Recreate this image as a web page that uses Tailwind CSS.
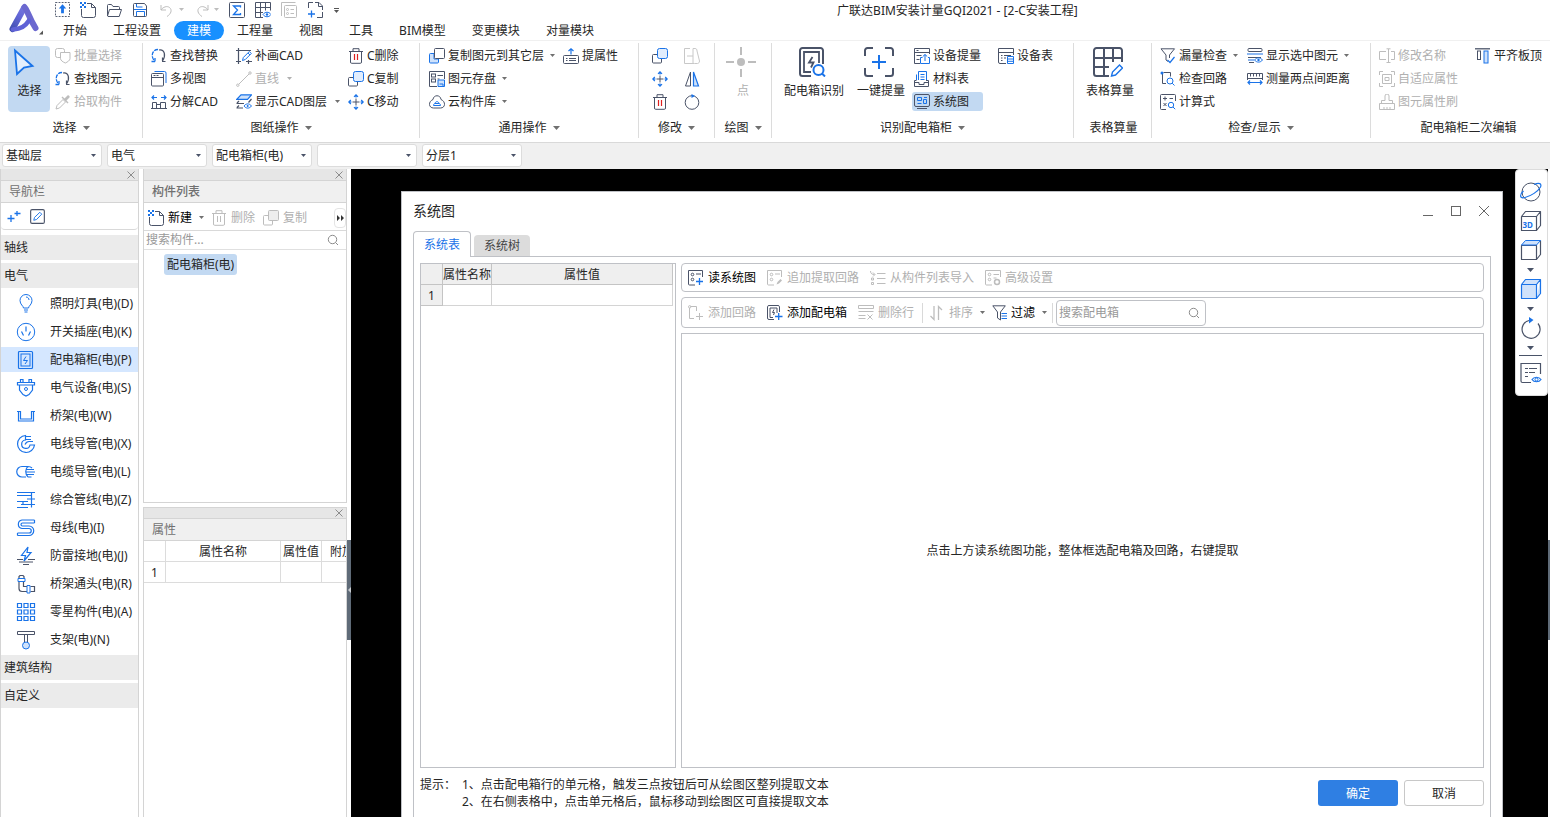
<!DOCTYPE html>
<html lang="zh-CN">
<head>
<meta charset="utf-8">
<title>广联达BIM安装计量GQI2021</title>
<script src="https://cdn.jsdelivr.net/npm/@tailwindcss/browser@4"></script>
</head>
<body class="h-screen overflow-hidden flex flex-col bg-white text-[#262626] text-xs leading-4 font-['Noto_Sans','Noto_Sans_CJK_SC',sans-serif]">

<svg class="hidden" fill="none">
  <symbol id="caret" viewBox="0 0 7 4"><path d="M0 0h7L3.5 4z" fill="currentColor"/></symbol>
  <symbol id="close" viewBox="0 0 8 8"><path d="M.5.5l7 7M7.5.5l-7 7" stroke="#8c8c8c"/></symbol>
  <symbol id="mag" viewBox="0 0 12 12"><circle cx="5.5" cy="5.5" r="4.2" stroke="#8c8c8c"/><path d="M8.5 8.500l2.500 2.500" stroke="#8c8c8c"/></symbol>

  <!-- quick access -->
  <symbol id="q-up" viewBox="0 0 16 16"><rect x=".5" y=".5" width="15" height="15" stroke="#4a5368" stroke-dasharray="2 1.300"/><path d="M8 2.500l4 4.500H9.500v5h-3V7H4z" fill="#1a73e8"/></symbol>
  <symbol id="new" viewBox="0 0 16 16"><path d="M7 1.500h4.500l4 4v8a2 2 0 0 1-2 2h-10a2 2 0 0 1-2-2V7M11.500 1.500v4h4" stroke="#4a5368"/><path d="M0 0h2v2H0zM4 0h2v2H4zM2 2h2v2H2zM0 4h2v2H0zM4 4h2v2H4z" fill="#1a73e8"/></symbol>
  <symbol id="q-open" viewBox="0 0 16 16"><path d="M1.500 14V3.500a1 1 0 0 1 1-1h3l1.500 2h5.500a1 1 0 0 1 1 1V7M1.500 14l2-6.500h12l-2.300 7H2z" stroke="#4a5368"/></symbol>
  <symbol id="q-save" viewBox="0 0 16 16"><path d="M1.500 2.500a1 1 0 0 1 1-1h10l2 2.500v9.500a1 1 0 0 1-1 1h-11a1 1 0 0 1-1-1z" stroke="#4a5368"/><path d="M4.500 2v3h6M4.500 14V9.500h8V14M2 7.500h12" stroke="#1a73e8"/></symbol>
  <symbol id="q-undo" viewBox="0 0 16 16"><path d="M2 3v5h5M2 8c2-3 6-4.500 8.500-2.500C13.500 8 12 12 8 14.500" stroke="#bdbdbd"/></symbol>
  <symbol id="q-redo" viewBox="0 0 16 16"><path d="M14 3v5H9M14 8c-2-3-6-4.500-8.500-2.500C2.500 8 4 12 8 14.500" stroke="#bdbdbd"/></symbol>
  <symbol id="q-sum" viewBox="0 0 16 16"><rect x=".5" y=".5" width="15" height="15" rx="1" stroke="#4a5368"/><path d="M11.500 5.500v-1.500h-7l4 4-4 4.500h7V11" stroke="#1a73e8" stroke-width="1.300"/></symbol>
  <symbol id="q-grid" viewBox="0 0 16 16"><path d="M.5 .5h15v8M.5 .5v15H8M.5 5.500h15M.5 10.500H8M5.500 .5v15M10.500 .5v8" stroke="#4a5368"/><path d="M8 12.500c2-3 6-3 8 0-2 3-6 3-8 0z" stroke="#1a73e8"/><circle cx="12" cy="12.500" r="1.200" fill="#1a73e8"/></symbol>
  <symbol id="q-list" viewBox="0 0 16 16"><rect x="3.500" y="3.500" width="12" height="12" rx="1" stroke="#bdbdbd"/><path d="M.5 14V.5h14M9.500 7.500H13M9.500 11.500H13" stroke="#bdbdbd"/><circle cx="6.500" cy="7.500" r="1" stroke="#bdbdbd"/><circle cx="6.500" cy="11.500" r="1" stroke="#bdbdbd"/></symbol>
  <symbol id="q-add" viewBox="0 0 16 16"><path d="M1.500 6V.5H6M8 .5h4l3.500 3.500V8M15.500 10v5.500H10M11.500 .5v4h4" stroke="#4a5368"/><path d="M4.500 8.500v7M1 12h7" stroke="#1a73e8" stroke-width="1.300"/></symbol>

  <!-- ribbon small icons -->
  <symbol id="batch" viewBox="0 0 16 16"><rect x=".5" y=".5" width="9" height="9" rx="2" stroke="#bdbdbd"/><path d="M5.500 4.500h9.500v6c0 2-2.500 3.500-4.700 4.500-2.300-1-4.800-2.500-4.800-4.500z" fill="#fff" stroke="#bdbdbd"/></symbol>
  <symbol id="find" viewBox="0 0 16 16"><path d="M7 1.500C1 1.500-.5 8.500 3.500 13M4 13.500V10M4 13.500H.5" stroke="#1a73e8" stroke-width="1.300" stroke-dasharray="4 1"/><path d="M8 2c6-1 7 6 3.500 11M11.500 13V9.500M11 13.500h3.500" stroke="#4a5368" stroke-width="1.200"/></symbol>
  <symbol id="pick" viewBox="0 0 16 16"><path d="M1 15l1-3.500 6-6 2.500 2.500-6 6z" stroke="#bdbdbd"/><path d="M6.500 3.500l6 6 1-1-2-2 3-3c.8-1-1-3-2-2l-3 3-2-2z" fill="#bdbdbd"/></symbol>
  <symbol id="views" viewBox="0 0 16 16"><path d="M3.500 .5h10a1.500 1.500 0 0 1 1.500 1.500v10" stroke="#1a73e8"/><rect x=".5" y="2.500" width="12" height="12.500" rx="1" stroke="#4a5368"/><path d="M.5 6.500h12M2.500 4.500h2M5.500 4.500h2" stroke="#4a5368"/></symbol>
  <symbol id="split" viewBox="0 0 16 16"><path d="M1.500 14.500v-6h4v6M9.500 14.500v-6h5v6M0 14.500h16M5.500 10.500h4" stroke="#4a5368"/><path d="M1 3.500h5M10 3.500h5M3 1.500l-2 2 2 2M13 1.500l2 2-2 2" stroke="#1a73e8" stroke-width="1.200"/></symbol>
  <symbol id="patch" viewBox="0 0 16 16"><path d="M2.500 0v16M0 2.500h15M0 13.500h5M12.500 12v4M10 13.500h6" stroke="#4a5368" stroke-width="1.200"/><path d="M6.500 12.500l.8-3 6-6 2 2-6 6zM12 5l2 2" stroke="#1a73e8"/></symbol>
  <symbol id="line" viewBox="0 0 16 16"><path d="M3 13L13 3" stroke="#bdbdbd"/><circle cx="1.800" cy="14.200" r="1.200" stroke="#bdbdbd"/><circle cx="14" cy="2" r="1.200" stroke="#bdbdbd"/></symbol>
  <symbol id="layers" viewBox="0 0 16 16"><path d="M5 .8h10.500l-4 4.500H.8z" stroke="#1a73e8" stroke-width="1.200" fill="#cfe2fb"/><path d="M.5 9.500h7.500M1 9l2-2M15.500 5l-3 3.500M.5 14h6.500M1 13.500l2-2" stroke="#4a5368" stroke-width="1.200"/><path d="M8 12c2-2.800 5.500-2.800 7.500 0-2 2.800-5.500 2.800-7.500 0z" stroke="#1a73e8"/><circle cx="11.700" cy="12" r="1" fill="#1a73e8"/></symbol>
  <symbol id="trash" viewBox="0 0 16 16"><path d="M1 3.500h14M5 3V.7h6V3M2.500 4v10a1.200 1.200 0 0 0 1.200 1.300h8.600a1.200 1.200 0 0 0 1.200-1.300V4" stroke="#4a5368"/><path d="M6.500 6v6M9.500 6v6" stroke="#e02020" stroke-width="1.200"/></symbol>
  <symbol id="trashg" viewBox="0 0 16 16"><path d="M1 3.500h14M5 3V.7h6V3M2.500 4v10a1.200 1.200 0 0 0 1.200 1.300h8.600a1.200 1.200 0 0 0 1.200-1.300V4M6.500 6v6M9.500 6v6" stroke="#bdbdbd"/></symbol>
  <symbol id="copy" viewBox="0 0 16 16"><path d="M5 6.500H1.500a1 1 0 0 0-1 1v6.500a1 1 0 0 0 1 1h7a1 1 0 0 0 1-1V11" stroke="#4a5368"/><rect x="5.500" y=".5" width="10" height="10" rx="2" stroke="#1a73e8" fill="#e1edfd"/></symbol>
  <symbol id="copyg" viewBox="0 0 16 16"><path d="M5 5.500H1.500a1 1 0 0 0-1 1v7.500a1 1 0 0 0 1 1h7a1 1 0 0 0 1-1V11" stroke="#bdbdbd"/><rect x="5.500" y=".5" width="10" height="10" rx="1" stroke="#bdbdbd" fill="#eee"/></symbol>
  <symbol id="copy2" viewBox="0 0 16 16"><path d="M5 5.500H1.500a1 1 0 0 0-1 1v7.500a1 1 0 0 0 1 1h7a1 1 0 0 0 1-1V11H5z" stroke="#1a73e8" fill="#cfe2fb"/><rect x="5.500" y=".5" width="10" height="10" rx="1" stroke="#4a5368" fill="#fff"/></symbol>
  <symbol id="move" viewBox="0 0 16 16"><path d="M8 4.500v7M4.500 8h7" stroke="#4a5368"/><path d="M8 3.500V1M8 12.500V15M3.500 8H1M12.500 8H15M6 2.800l2-2 2 2M6 13.200l2 2 2-2M2.800 6l-2 2 2 2M13.200 6l2 2-2 2" stroke="#1a73e8" stroke-width="1.200"/></symbol>
  <symbol id="store" viewBox="0 0 16 16"><path d="M8 15.500H.5V.5h15V8M8.500 4.500H14M8.500 8h2" stroke="#4a5368"/><rect x="2.500" y="3" width="4" height="3" stroke="#4a5368"/><rect x="2.500" y="8" width="4" height="3" stroke="#4a5368"/><path d="M9 9h6.500v6.500H9zM10.500 13h3.500v2.500" stroke="#1a73e8" fill="#cfe2fb"/></symbol>
  <symbol id="cloud" viewBox="0 0 16 16"><path d="M4 5.500c.5-5 7.500-5 8 0 5 2 4.500 8.500-.5 8.500h-7c-5 0-5.500-6.500-.5-8.500z" stroke="#4a5368"/><path d="M4.500 11.500c0-1.500 1-2 1.500-2 .5-2.500 3.500-2.500 4 0 .5 0 1.500.5 1.500 2zM6 9.500h4" stroke="#1a73e8"/></symbol>
  <symbol id="lift" viewBox="0 0 16 16"><rect x=".5" y="7.500" width="15" height="8" rx="1" stroke="#4a5368"/><path d="M3 10.500h1.500M6 10.500h7M3 12.500h1.500M6 12.500h7" stroke="#4a5368"/><path d="M8 6.500V1M5.500 3L8 .8 10.500 3" stroke="#1a73e8" stroke-width="1.200"/></symbol>
  <symbol id="mirrorg" viewBox="0 0 16 16"><path d="M6 .5H.5v15H9M9 8H3M9 15.500V.5h2c1.500 0 2 1 2 2.500l2.500 10c0 1.500-1 2.500-2 2.500h-3z" stroke="#c8c8c8"/></symbol>
  <symbol id="mirror" viewBox="0 0 16 16"><path d="M6.500 1v14H1.500z" stroke="#4a5368"/><path d="M9.500 1v14h5z" stroke="#1a73e8" stroke-width="1.200" fill="#cfe2fb"/></symbol>
  <symbol id="rot" viewBox="0 0 16 16"><circle cx="8" cy="8.500" r="6.800" stroke="#4a5368"/><path d="M7.500 0v4l3.500-2z" fill="#1a73e8"/></symbol>
  <symbol id="devup" viewBox="0 0 16 16"><path d="M6 15.500H.5V.5h15V6M.5 4.500h15M2.500 2.500h2M2.500 7.500h5M2.500 11.500h3" stroke="#4a5368"/><path d="M8.500 9.500H6.500v6h9v-6H14M11 13V6.500M8.800 8.500l2.200-2 2.200 2" stroke="#1a73e8"/></symbol>
  <symbol id="mat" viewBox="0 0 16 16"><path d="M2.500 9V3.500M12.500 9V.5h-8v8.500M6.500 3.500h4M6.500 6h4M6.500 8.500h4" stroke="#1a73e8"/><path d="M2.500 9.500h-2v6h14v-6H12M.5 11.500h4.500v2h5v-2h4.500" stroke="#4a5368"/></symbol>
  <symbol id="sys" viewBox="0 0 16 16"><rect x=".5" y=".5" width="15" height="12" rx="1.500" stroke="#4a5368"/><path d="M3 14.500h10" stroke="#4a5368"/><path d="M3.500 3.500h4v3h-4zM10 3.500h3M9.500 5.500h3v4h-3zM3.500 9.500h4" stroke="#1a73e8"/></symbol>
  <symbol id="devtab" viewBox="0 0 16 16"><path d="M8 15.500H2A1.500 1.500 0 0 1 .5 14V.5h15V7M.5 4.500h15M3 7.500h1.500M6 7.500h7M3 10h1.500M6 10h2M3 12.500h1.500" stroke="#4a5368"/><path d="M9.500 8.500h6v7h-6zM9.500 11h6M9.500 13.300h6" stroke="#1a73e8"/></symbol>
  <symbol id="funnelc" viewBox="0 0 16 16"><path d="M1 .8h13.500L9.500 7v3M1 .8L6 7v5l2 1.500" stroke="#4a5368"/><path d="M7.500 12l2.500 2.500L14.500 9" stroke="#1a73e8" stroke-width="1.200"/></symbol>
  <symbol id="loop" viewBox="0 0 16 16"><path d="M2.500 3v9.500H6M3.500 1.500h7v4" stroke="#4a5368"/><circle cx="2" cy="2" r="1.500" fill="#1a73e8"/><circle cx="10" cy="10" r="3" stroke="#1a73e8"/><path d="M12.200 12.200L14.500 14.500" stroke="#1a73e8"/></symbol>
  <symbol id="calc" viewBox="0 0 16 16"><path d="M6 15.500H1.500a1 1 0 0 1-1-1V1.500a1 1 0 0 1 1-1h13a1 1 0 0 1 1 1V7M3 4.500h4M5 2.500v4M9.500 4.500H13M3.500 9l3 3M6.500 9l-3 3" stroke="#4a5368"/><circle cx="11" cy="11" r="2.700" stroke="#1a73e8"/><path d="M13 13l2.200 2.200" stroke="#1a73e8"/></symbol>
  <symbol id="showsel" viewBox="0 0 16 16"><rect x="1" y=".5" width="14" height="3" rx="1" stroke="#4a5368"/><path d="M1 9.500h13M2 14.500h5" stroke="#4a5368"/><path d="M1 12h6M0 6h16" stroke="#1a73e8" stroke-width="1.200"/><path d="M7.500 12c2-2.800 6-2.800 8 0-2 2.800-6 2.800-8 0z" fill="#fff" stroke="#1a73e8"/><circle cx="11.500" cy="12" r="1.200" fill="#1a73e8"/></symbol>
  <symbol id="ruler" viewBox="0 0 16 16"><path d="M.5 9V2.500h15V9M3.500 2.500v3M6.500 2.500v3M9.500 2.500v3M12.500 2.500v3M.5 7.500h15" stroke="#4a5368"/><path d="M1 11.500h14M3 9.500l-2 2 2 2M13 9.500l2 2-2 2" stroke="#1a73e8" stroke-width="1.200"/></symbol>
  <symbol id="rename" viewBox="0 0 16 16"><path d="M7 3.500H.5v8H7M12 3.500h3.500v8H12M9.500 1v13M7.500.8h4M7.500 14.500h4" stroke="#bdbdbd"/></symbol>
  <symbol id="adapt" viewBox="0 0 16 16"><path d="M.5 4V.5H4M12 .5h3.500V4M15.500 12v3.500H12M4 15.500H.5V12M3.500 3.500h9v9h-9zM6 6.500h4v3H6z" stroke="#bdbdbd"/></symbol>
  <symbol id="brush" viewBox="0 0 16 16"><path d="M.5 9.500v6h15v-6zM2.500 9V6.500H6V2a2 2 0 0 1 4 0v4.500h3.500V9M5 13v2.500M8 13v2.500M11 13v2.500" stroke="#bdbdbd"/></symbol>
  <symbol id="align" viewBox="0 0 16 16"><path d="M0 .8h15" stroke="#4a5368" stroke-width="1.300"/><rect x="2.500" y="3" width="3" height="8.500" stroke="#4a5368"/><rect x="9" y="3" width="4" height="12" stroke="#1a73e8" fill="#cfe2fb"/></symbol>

  <!-- large ribbon icons -->
  <symbol id="b-cursor" viewBox="0 0 30 30"><path d="M3 2.500L20.500 18 12 19.500 5 26z" stroke="#1a73e8" stroke-width="1.800" fill="#e4effc"/></symbol>
  <symbol id="b-point" viewBox="0 0 30 30"><path d="M15 0v8M15 22v8M0 15h8M22 15h8" stroke="#bdbdbd" stroke-width="2"/><circle cx="15" cy="15" r="4" fill="#bdbdbd"/></symbol>
  <symbol id="b-box" viewBox="0 0 30 30"><path d="M12 29H3.500A2.500 2.500 0 0 1 1 26.500v-23A2.500 2.500 0 0 1 3.500 1h18A2.500 2.500 0 0 1 24 3.500V17" stroke="#4a5368" stroke-width="2"/><path d="M12 25H5V5h15v11" stroke="#4a5368" stroke-width="1.800"/><path d="M13.500 10L10 15.500h4.500L12 20.500" stroke="#4a5368" stroke-width="1.800"/><circle cx="19.500" cy="23" r="5" stroke="#1a73e8" stroke-width="2"/><path d="M23 26.500L26 29.500" stroke="#1a73e8" stroke-width="2"/></symbol>
  <symbol id="b-key" viewBox="0 0 30 30"><path d="M1 9V3.500A2.500 2.500 0 0 1 3.500 1H9M21 1h5.500A2.500 2.500 0 0 1 29 3.500V9M29 21v5.500a2.500 2.500 0 0 1-2.500 2.500H21M9 29H3.500A2.500 2.500 0 0 1 1 26.500V21" stroke="#4a5368" stroke-width="2"/><path d="M15 8v14M8 15h14" stroke="#1a73e8" stroke-width="2"/></symbol>
  <symbol id="b-tab" viewBox="0 0 30 30"><path d="M16 29H3.500A2.500 2.500 0 0 1 1 26.500v-23A2.500 2.500 0 0 1 3.500 1h23A2.500 2.500 0 0 1 29 3.500V15M1 11h28M1 20h15M11 1v28M20 1v14" stroke="#4a5368" stroke-width="2"/><path d="M18.500 29l1-4 7-7 3 3-7 7z" stroke="#1a73e8" stroke-width="1.400" fill="#fff"/></symbol>

  <!-- panel tool icons -->
  <symbol id="pluses" viewBox="0 0 16 16"><path d="M4 7v7M.5 10.500h7M10 3v5M7.500 5.500h6" stroke="#1a73e8" stroke-width="1.300"/></symbol>
  <symbol id="editbox" viewBox="0 0 16 16"><rect x=".7" y=".7" width="14.600" height="14.600" rx="1.500" stroke="#4a5368" stroke-width="1.200"/><path d="M4 12l.8-3 5.700-5.500 2 2-5.500 5.700z" stroke="#1a73e8"/></symbol>

  <!-- navigation icons, 20px -->
  <symbol id="n-lamp" viewBox="0 0 20 20"><path d="M7.500 14c0-2-3.500-3.500-3.500-7.500a6 6 0 0 1 12 0c0 4-3.500 5.500-3.500 7.500zM8 16h4M8.500 18h3M10 3c2 0 3 1.500 3 3" stroke="#1a73e8"/></symbol>
  <symbol id="n-sock" viewBox="0 0 20 20"><circle cx="10" cy="10" r="8.700" stroke="#1a73e8"/><path d="M10 4.500v5M5.500 9.500l2 4M14.500 9.500l-2 4" stroke="#1a73e8" stroke-width="1.200"/></symbol>
  <symbol id="n-box" viewBox="0 0 20 20"><rect x="2.500" y="1.500" width="14" height="17" rx="1" stroke="#1a73e8" stroke-width="1.200"/><rect x="5" y="4" width="9" height="12" stroke="#1a73e8"/><path d="M10 6.500L7.500 10.500h4L9 14" stroke="#1a73e8"/></symbol>
  <symbol id="n-dev" viewBox="0 0 20 20"><path d="M1.500 4.500h17v2.500h-17zM4.500 1.500h2.500v3H4.500zM13 1.500h2.500v3H13zM3.500 7v5l3.500 4.500 3 1.500 3-1.500 3.500-4.500V7" stroke="#1a73e8" stroke-width="1.200"/><circle cx="10" cy="11" r="1.500" stroke="#1a73e8"/></symbol>
  <symbol id="n-tray" viewBox="0 0 20 20"><path d="M1 5.500h3.500v7.500h11V5.500H19M2.500 5.500v9.500h15V5.500" stroke="#1a73e8" stroke-width="1.200"/></symbol>
  <symbol id="n-wire" viewBox="0 0 20 20"><path d="M9.500 1.500a8.500 8.500 0 1 0 9 9.500h-4.500a4.200 4.200 0 1 1-4.500-5zM9.500 2.500H15M9.500 5.500h5.500M9 10.500c1-2 2-3 4-3h4" stroke="#1a73e8" stroke-width="1.200"/></symbol>
  <symbol id="n-cable" viewBox="0 0 20 20"><path d="M12 4.500H6a5 5 0 0 0 0 10.500h4M12 4.500c-3 2-3 8 0 10.500M12 4.500c1.500 0 3 .5 4 1.500M10.500 7.500H18M10 10h9M10.500 12.500H18M12 15h3.500" stroke="#1a73e8" stroke-width="1.200"/></symbol>
  <symbol id="n-comp" viewBox="0 0 20 20"><path d="M1 2.500h18M1 5.500h14M1 11.500h11M5 14.500h14M1 17.500h11M15.500 2.500v15M11 9h8M7 11.500v3" stroke="#1a73e8" stroke-width="1.200"/></symbol>
  <symbol id="n-bus" viewBox="0 0 20 20"><path d="M18.500 2H6a4.300 4.300 0 0 0 0 8.500h7a2 2 0 0 1 0 4.500H1.500M18.500 5H6.500a1.500 1.500 0 0 0 0 3H13a4.500 4.500 0 0 1 0 9.500H1.500M18.500 2v3M1.500 15v2.500" stroke="#1a73e8" stroke-width="1.200"/></symbol>
  <symbol id="n-ltn" viewBox="0 0 20 20"><path d="M12 1L5.500 9.500h4L8 15l7-8.500h-4z" stroke="#1a73e8" stroke-width="1.200"/><path d="M1 13.500h6M12 13.500h7M3 16h14M7 18.500h6" stroke="#4a5368"/></symbol>
  <symbol id="n-elb" viewBox="0 0 20 20"><path d="M3 4V2.500L4 1.500h3l1 1V4M3 8v6.500A3 3 0 0 0 6 17.500h5M7.500 8v4.500h3.500M14.500 12.500h4v5h-4" stroke="#4a5368" stroke-width="1.200"/><path d="M2 4.500h7v3H2zM11 11.500h3V19h-3z" stroke="#1a73e8"/></symbol>
  <symbol id="n-grid" viewBox="0 0 20 20"><path d="M1.500 1.500h4v4h-4zM8 1.500h4v4H8zM14.500 1.500h4v4h-4zM1.500 8h4v4h-4zM8 8h4v4H8zM14.500 8h4v4h-4zM1.500 14.500h4v4h-4zM8 14.500h4v4H8zM14.500 14.500h4v4h-4z" stroke="#1a73e8" stroke-width="1.200"/></symbol>
  <symbol id="n-sup" viewBox="0 0 20 20"><path d="M1.500 1.500h17v3h-17zM8.500 4.500v8M11.500 4.500v8" stroke="#4a5368"/><circle cx="10" cy="15.500" r="3.500" stroke="#1a73e8" fill="#cfe2fb"/></symbol>

  <!-- dialog tool icons -->
  <symbol id="d-read" viewBox="0 0 16 16"><path d="M7 15H1.500a1 1 0 0 1-1-1V.5h14V7M8 4h5" stroke="#4a5368"/><circle cx="4.500" cy="4.500" r="1.300" stroke="#4a5368"/><circle cx="4.500" cy="9.500" r="1.300" stroke="#4a5368"/><path d="M8 11.500h7M11.500 8v7" stroke="#1a73e8" stroke-width="1.300"/></symbol>
  <symbol id="d-app" viewBox="0 0 16 16"><path d="M7 15H1.500a1 1 0 0 1-1-1V.5h14V7M8 4h5" stroke="#bdbdbd"/><circle cx="4.500" cy="4.500" r="1.300" stroke="#bdbdbd"/><circle cx="4.500" cy="9.500" r="1.300" stroke="#bdbdbd"/><path d="M9.500 14.500l1-2.500 3-3 1.500 1.500-3 3z" fill="#bdbdbd"/></symbol>
  <symbol id="d-imp" viewBox="0 0 16 16"><path d="M.5 1c0 3 2 3.500 4 3.500M3 2.500l2 2-2 2M7 3.500h8.500M7 8.500h8.500M7 13.500h8.500M1.500 8h2v2h-2zM1.500 12.500h2v2h-2z" stroke="#bdbdbd"/></symbol>
  <symbol id="d-adv" viewBox="0 0 16 16"><path d="M7 15H1.500a1 1 0 0 1-1-1V.5h15V7M8.500 4.500H14M8.500 8h3" stroke="#bdbdbd"/><circle cx="4.500" cy="4.500" r="1.300" stroke="#bdbdbd"/><circle cx="4.500" cy="9.500" r="1.300" stroke="#bdbdbd"/><circle cx="12" cy="12" r="2.500" stroke="#bdbdbd" stroke-width="1.500"/></symbol>
  <symbol id="d-loop" viewBox="0 0 16 16"><path d="M1.500 3v10.500H6M2.500 1.500h6V6M8 11.500h7M11.500 8v7" stroke="#bdbdbd"/><circle cx="1.700" cy="1.800" r="1.200" stroke="#bdbdbd"/></symbol>
  <symbol id="d-box" viewBox="0 0 16 16"><path d="M7 14.500H2a1.500 1.500 0 0 1-1.500-1.500V1.800A1.500 1.500 0 0 1 2 .5h9a1.500 1.500 0 0 1 1.500 1.300V7M6 12.500H3V3h7v5M7 4.500L5.500 7.500h2L6.500 10" stroke="#4a5368"/><path d="M8 11.500h7.500M11.700 8v7" stroke="#1a73e8" stroke-width="1.300"/></symbol>
  <symbol id="d-del" viewBox="0 0 16 16"><path d="M.5 .5h15v3H.5zM.5 6.500h15M.5 10.500h7M.5 13.500h7M9.500 9.500l5 5M14.500 9.500l-5 5" stroke="#bdbdbd"/></symbol>
  <symbol id="d-sort" viewBox="0 0 16 16"><path d="M5 1v13.500L1.500 11M9.500 15V1.500L13 5" stroke="#bdbdbd" stroke-width="1.300"/></symbol>
  <symbol id="d-fil" viewBox="0 0 16 16"><path d="M.8.8h12.500L8.500 7v8L5.500 13V7z" stroke="#4a5368" fill="#fff"/><path d="M9.500 8.500H15M9.500 11h5.500M9.500 13.500h5.500" stroke="#1a73e8" stroke-width="1.200"/></symbol>

  <!-- view tools -->
  <symbol id="v-orb" viewBox="0 0 22 22"><circle cx="11" cy="11" r="9" stroke="#4a5368"/><path d="M3.500 10C-1 14 0 18 5 16.500c6-1.500 13-6 15.500-10.500C22 2.500 19 1.500 14 3.500" stroke="#1a73e8" stroke-width="1.200"/></symbol>
  <symbol id="v-3d" viewBox="0 0 22 22"><path d="M1.500 6.500h15v14h-15zM1.500 6.500L5.500 1.500h15l-4 5M20.500 1.500v14l-4 5" stroke="#4a5368" stroke-width="1.200" stroke-linejoin="round"/></symbol>
  <symbol id="v-top" viewBox="0 0 22 22"><path d="M1.500 6.500h15v14h-15zM20.500 1.500v14l-4 5" stroke="#4a5368" stroke-width="1.200" stroke-linejoin="round"/><path d="M1.500 6L5.500 1.500h15l-4 4.500z" stroke="#1a73e8" fill="#cfe2fb"/></symbol>
  <symbol id="v-solid" viewBox="0 0 22 22"><path d="M1.500 6.500h15v14h-15zM1.500 6.500L5.500 1.500h15l-4 5M20.500 1.500v14l-4 5" stroke="#1a73e8" stroke-width="1.200" fill="#cfe2fb" stroke-linejoin="round"/></symbol>
  <symbol id="v-rot" viewBox="0 0 22 22"><path d="M9 3.500a9 9 0 1 0 9 3" stroke="#4a5368" stroke-width="1.200"/><path d="M9 0v6.500L13.500 3z" fill="#1a73e8"/></symbol>
  <symbol id="v-list" viewBox="0 0 22 22"><path d="M11 20.500H2.500a1.500 1.500 0 0 1-1.500-1.500V1.500h19.500V12M5 6.500h3M9 6.500h8M5 10.500h3M9 10.500h6M5 14.500h3" stroke="#4a5368" stroke-width="1.200"/><path d="M12 17.500c2-3 7-3 9 0-2 3-7 3-9 0z" stroke="#1a73e8" stroke-width="1.200"/><circle cx="16.500" cy="17.500" r="1.500" stroke="#1a73e8"/></symbol>
</svg>

<header class="relative shrink-0 h-10 flex">
  <div class="w-[50px] shrink-0">
    <svg class="ml-2 mt-[2px] size-9" viewBox="0 0 36 36" fill="none">
      <defs><linearGradient id="lg" gradientUnits="userSpaceOnUse" x1="2" y1="30" x2="26" y2="2"><stop offset="0" stop-color="#3a4aa8"/><stop offset=".5" stop-color="#6468d8"/><stop offset="1" stop-color="#8a86e0"/></linearGradient></defs>
      <path d="M4.500 27L16 6" stroke="url(#lg)" stroke-width="6" stroke-linecap="round"/><path d="M16.500 5c3 3 4 10 11 21" stroke="#6b68cf" stroke-width="6" stroke-linecap="round"/><path d="M5 27.500c8-.5 12-3 16-9" stroke="#5f62d6" stroke-width="4.500" stroke-linecap="round"/><path d="M35 28.500v4h-4z" fill="#555"/></svg>
  </div>
  <div class="flex flex-col">
    <div class="flex items-center h-5 pl-[5px] gap-[10px]" role="toolbar" aria-label="快速访问">
      <button aria-label="升级"><svg class="size-[15px]" fill="none"><use href="#q-up"/></svg></button>
      <button aria-label="新建文件"><svg class="size-4" fill="none"><use href="#new"/></svg></button>
      <button aria-label="打开"><svg class="size-4" fill="none"><use href="#q-open"/></svg></button>
      <button aria-label="保存"><svg class="size-4" fill="none"><use href="#q-save"/></svg></button>
      <button aria-label="撤销" class="flex items-center gap-1 ml-px text-[#bdbdbd]"><svg class="size-4" fill="none"><use href="#q-undo"/></svg><svg class="w-[5px] h-[3px]"><use href="#caret"/></svg></button>
      <button aria-label="恢复" class="flex items-center gap-1 text-[#bdbdbd]"><svg class="size-4" fill="none"><use href="#q-redo"/></svg><svg class="w-[5px] h-[3px]"><use href="#caret"/></svg></button>
      <button aria-label="汇总"><svg class="size-4" fill="none"><use href="#q-sum"/></svg></button>
      <button aria-label="查看报表"><svg class="size-4" fill="none"><use href="#q-grid"/></svg></button>
      <button aria-label="列表"><svg class="size-4" fill="none"><use href="#q-list"/></svg></button>
      <button aria-label="添加"><svg class="size-4" fill="none"><use href="#q-add"/></svg></button>
      <button aria-label="更多" class="flex flex-col items-center gap-px pt-[2px] ml-px text-[#555]"><span class="w-[5px] h-px bg-[#555]"></span><svg class="w-[5px] h-[3px]"><use href="#caret"/></svg></button>
    </div>
    <nav class="flex items-center h-[19px] mt-[2px] whitespace-nowrap">
      <button class="px-[13px] h-[19px] leading-5">开始</button>
      <button class="px-[13px] h-[19px] leading-5">工程设置</button>
      <button class="px-[13px] h-[19px] leading-5 rounded-full bg-[#1890ff] text-white">建模</button>
      <button class="px-[13px] h-[19px] leading-5">工程量</button>
      <button class="px-[13px] h-[19px] leading-5">视图</button>
      <button class="px-[13px] h-[19px] leading-5">工具</button>
      <button class="px-[13px] h-[19px] leading-5">BIM模型</button>
      <button class="px-[13px] h-[19px] leading-5">变更模块</button>
      <button class="px-[13px] h-[19px] leading-5">对量模块</button>
    </nav>
  </div>
  <h1 class="flex-1 text-center pt-[2px] pr-[242px] whitespace-nowrap leading-[18px]">广联达BIM安装计量GQI2021 - [2-C安装工程]</h1>
</header>

<section class="shrink-0 flex border-t border-[#f0f0f0] pt-[2px] pb-1 whitespace-nowrap overflow-hidden" aria-label="功能区">
  <div class="shrink-0 w-[143px] h-[95px] border-r border-[#dcdcdc] flex flex-col">
    <div class="flex pt-[3px] pl-2 h-[75px]">
      <button class="w-[42px] h-[66px] rounded bg-[#c2d9f2] flex flex-col items-start"><svg class="w-[30px] h-[34px] ml-1" fill="none"><use href="#b-cursor"/></svg><span class="self-center pl-px mt-[3px]">选择</span></button>
      <div class="flex flex-col gap-1 ml-[3px]">
        <button class="h-[19px] px-[2px] flex items-center gap-[3px] text-[#b0b0b0]"><svg class="size-4" fill="none"><use href="#batch"/></svg>批量选择</button>
        <button class="h-[19px] px-[2px] flex items-center gap-[3px]"><svg class="size-4" fill="none"><use href="#find"/></svg>查找图元</button>
        <button class="h-[19px] px-[2px] flex items-center gap-[3px] text-[#b0b0b0]"><svg class="size-4" fill="none"><use href="#pick"/></svg>拾取构件</button>
      </div>
    </div>
    <button class="h-5 flex items-center justify-center gap-[6px]">选择<svg class="w-[7px] h-1 text-[#707070]"><use href="#caret"/></svg></button>
  </div>

  <div class="shrink-0 w-[277px] h-[95px] border-r border-[#dcdcdc] flex flex-col">
    <div class="flex pt-[3px] pl-[6px] h-[75px]">
      <div class="flex flex-col gap-1 w-[85px]">
        <button class="h-[19px] px-[2px] flex items-center gap-[3px]"><svg class="size-4" fill="none"><use href="#find"/></svg>查找替换</button>
        <button class="h-[19px] px-[2px] flex items-center gap-[3px]"><svg class="size-4" fill="none"><use href="#views"/></svg>多视图</button>
        <button class="h-[19px] px-[2px] flex items-center gap-[3px]"><svg class="size-4" fill="none"><use href="#split"/></svg>分解CAD</button>
      </div>
      <div class="flex flex-col gap-1 w-[112px]">
        <button class="h-[19px] px-[2px] flex items-center gap-[3px]"><svg class="size-4" fill="none"><use href="#patch"/></svg>补画CAD</button>
        <button class="h-[19px] px-[2px] flex items-center gap-[3px] text-[#b0b0b0]"><svg class="size-4" fill="none"><use href="#line"/></svg>直线<svg class="w-[5px] h-[3px] ml-[5px]"><use href="#caret"/></svg></button>
        <button class="h-[19px] px-[2px] flex items-center gap-[3px]"><svg class="size-4" fill="none"><use href="#layers"/></svg>显示CAD图层<svg class="w-[5px] h-[3px] ml-[5px] text-[#707070]"><use href="#caret"/></svg></button>
      </div>
      <div class="flex flex-col gap-1">
        <button class="h-[19px] px-[2px] flex items-center gap-[3px]"><svg class="size-4" fill="none"><use href="#trash"/></svg>C删除</button>
        <button class="h-[19px] px-[2px] flex items-center gap-[3px]"><svg class="size-4" fill="none"><use href="#copy"/></svg>C复制</button>
        <button class="h-[19px] px-[2px] flex items-center gap-[3px]"><svg class="size-4" fill="none"><use href="#move"/></svg>C移动</button>
      </div>
    </div>
    <button class="h-5 flex items-center justify-center gap-[6px]">图纸操作<svg class="w-[7px] h-1 text-[#707070]"><use href="#caret"/></svg></button>
  </div>

  <div class="shrink-0 w-[219px] h-[95px] border-r border-[#dcdcdc] flex flex-col">
    <div class="flex pt-[3px] pl-[7px] h-[75px]">
      <div class="flex flex-col gap-1 w-[134px]">
        <button class="h-[19px] px-[2px] flex items-center gap-[3px]"><svg class="size-4" fill="none"><use href="#copy2"/></svg>复制图元到其它层<svg class="w-[5px] h-[3px] ml-[3px] text-[#707070]"><use href="#caret"/></svg></button>
        <button class="h-[19px] px-[2px] flex items-center gap-[3px]"><svg class="size-4" fill="none"><use href="#store"/></svg>图元存盘<svg class="w-[5px] h-[3px] ml-[3px] text-[#707070]"><use href="#caret"/></svg></button>
        <button class="h-[19px] px-[2px] flex items-center gap-[3px]"><svg class="size-4" fill="none"><use href="#cloud"/></svg>云构件库<svg class="w-[5px] h-[3px] ml-[3px] text-[#707070]"><use href="#caret"/></svg></button>
      </div>
      <button class="h-[19px] px-[2px] flex items-center gap-[3px]"><svg class="size-4" fill="none"><use href="#lift"/></svg>提属性</button>
    </div>
    <button class="h-5 flex items-center justify-center gap-[6px]">通用操作<svg class="w-[7px] h-1 text-[#707070]"><use href="#caret"/></svg></button>
  </div>

  <div class="shrink-0 w-[76px] h-[95px] border-r border-[#dcdcdc] flex flex-col">
    <div class="h-[75px]">
      <div class="grid grid-cols-[32px_20px] gap-y-1 pt-[3px] pl-[11px]">
        <button aria-label="复制" class="h-[19px] px-[2px] flex items-center"><svg class="size-4" fill="none"><use href="#copy"/></svg></button>
        <button aria-label="拉伸" class="h-[19px] px-[2px] flex items-center"><svg class="size-4" fill="none"><use href="#mirrorg"/></svg></button>
        <button aria-label="移动" class="h-[19px] px-[2px] flex items-center"><svg class="size-4" fill="none"><use href="#move"/></svg></button>
        <button aria-label="镜像" class="h-[19px] px-[2px] flex items-center"><svg class="size-4" fill="none"><use href="#mirror"/></svg></button>
        <button aria-label="删除" class="h-[19px] px-[2px] flex items-center"><svg class="size-4" fill="none"><use href="#trash"/></svg></button>
        <button aria-label="旋转" class="h-[19px] px-[2px] flex items-center"><svg class="size-4" fill="none"><use href="#rot"/></svg></button>
      </div>
    </div>
    <button class="h-5 flex items-center justify-center gap-[6px]">修改<svg class="w-[7px] h-1 text-[#707070]"><use href="#caret"/></svg></button>
  </div>

  <div class="shrink-0 w-[57px] h-[95px] border-r border-[#dcdcdc] flex flex-col">
    <div class="h-[75px] pt-1 pl-[11px]">
      <button class="flex flex-col items-center gap-[6px] text-[#b0b0b0]"><svg class="size-[30px]" fill="none"><use href="#b-point"/></svg><span class="pl-1">点</span></button>
    </div>
    <button class="h-5 flex items-center justify-center gap-[6px]">绘图<svg class="w-[7px] h-1 text-[#707070]"><use href="#caret"/></svg></button>
  </div>

  <div class="shrink-0 w-[302px] h-[95px] border-r border-[#dcdcdc] flex flex-col">
    <div class="flex pt-[3px] pl-[10px] h-[75px]">
      <button class="w-16 flex flex-col items-center gap-[6px] pt-px"><svg class="size-[30px]" fill="none"><use href="#b-box"/></svg>配电箱识别</button>
      <button class="w-[52px] ml-[9px] flex flex-col items-center gap-[6px] pt-px"><svg class="w-[30px] h-[30px] mr-1" fill="none"><use href="#b-key"/></svg>一键提量</button>
      <div class="flex flex-col gap-1 ml-[5px]">
        <button class="h-[19px] px-[2px] flex items-center gap-[3px]"><svg class="size-4" fill="none"><use href="#devup"/></svg>设备提量</button>
        <button class="h-[19px] px-[2px] flex items-center gap-[3px]"><svg class="size-4" fill="none"><use href="#mat"/></svg>材料表</button>
        <button class="h-[19px] px-[2px] flex items-center gap-[3px] rounded-[3px] bg-[#c2d9f2]"><svg class="size-4" fill="none"><use href="#sys"/></svg>系统图</button>
      </div>
      <button class="h-[19px] px-[2px] ml-[13px] flex items-center gap-[3px]"><svg class="size-4" fill="none"><use href="#devtab"/></svg>设备表</button>
    </div>
    <button class="h-5 flex items-center justify-center gap-[6px]">识别配电箱柜<svg class="w-[7px] h-1 text-[#707070]"><use href="#caret"/></svg></button>
  </div>

  <div class="shrink-0 w-[78px] h-[95px] border-r border-[#dcdcdc] flex flex-col">
    <div class="h-[75px] pt-1 pl-[10px]">
      <button class="w-[52px] flex flex-col items-center gap-[6px]"><svg class="w-[30px] h-[30px] mr-1" fill="none"><use href="#b-tab"/></svg>表格算量</button>
    </div>
    <button class="h-5 flex items-center justify-center pl-[2px]">表格算量</button>
  </div>

  <div class="shrink-0 w-[219px] h-[95px] border-r border-[#dcdcdc] flex flex-col">
    <div class="flex pt-[3px] pl-[6px] h-[75px]">
      <div class="flex flex-col gap-1 w-[87px]">
        <button class="h-[19px] px-[2px] flex items-center gap-[3px]"><svg class="size-4" fill="none"><use href="#funnelc"/></svg>漏量检查<svg class="w-[5px] h-[3px] ml-[3px] text-[#707070]"><use href="#caret"/></svg></button>
        <button class="h-[19px] px-[2px] flex items-center gap-[3px]"><svg class="size-4" fill="none"><use href="#loop"/></svg>检查回路</button>
        <button class="h-[19px] px-[2px] flex items-center gap-[3px]"><svg class="size-4" fill="none"><use href="#calc"/></svg>计算式</button>
      </div>
      <div class="flex flex-col gap-1">
        <button class="h-[19px] px-[2px] flex items-center gap-[3px]"><svg class="size-4" fill="none"><use href="#showsel"/></svg>显示选中图元<svg class="w-[5px] h-[3px] ml-[3px] text-[#707070]"><use href="#caret"/></svg></button>
        <button class="h-[19px] px-[2px] flex items-center gap-[3px]"><svg class="size-4" fill="none"><use href="#ruler"/></svg>测量两点间距离</button>
      </div>
    </div>
    <button class="h-5 flex items-center justify-center gap-[6px]">检查/显示<svg class="w-[7px] h-1 text-[#707070]"><use href="#caret"/></svg></button>
  </div>

  <div class="shrink-0 w-[195px] h-[95px] flex flex-col">
    <div class="flex pt-[3px] pl-[6px] h-[75px]">
      <div class="flex flex-col gap-1 w-24">
        <button class="h-[19px] px-[2px] flex items-center gap-[3px] text-[#b0b0b0]"><svg class="size-4" fill="none"><use href="#rename"/></svg>修改名称</button>
        <button class="h-[19px] px-[2px] flex items-center gap-[3px] text-[#b0b0b0]"><svg class="size-4" fill="none"><use href="#adapt"/></svg>自适应属性</button>
        <button class="h-[19px] px-[2px] flex items-center gap-[3px] text-[#b0b0b0]"><svg class="size-4" fill="none"><use href="#brush"/></svg>图元属性刷</button>
      </div>
      <button class="h-[19px] px-[2px] flex items-center gap-[3px]"><svg class="size-4" fill="none"><use href="#align"/></svg>平齐板顶</button>
    </div>
    <button class="h-5 flex items-center justify-center">配电箱柜二次编辑</button>
  </div>
</section>

<div class="shrink-0 h-[27px] border-t border-[#d9d9d9] bg-[#f0f0f0] flex items-start pt-px pl-[2px] gap-[5px]">
  <label class="relative"><select aria-label="楼层" class="appearance-none w-[100px] h-[23px] pl-[3px] bg-white border border-[#dcdcdc] rounded-[3px]"><option>基础层</option></select><svg class="absolute right-[6px] top-[10px] w-[5px] h-[3px] text-[#4a5368]"><use href="#caret"/></svg></label>
  <label class="relative"><select aria-label="专业" class="appearance-none w-[100px] h-[23px] pl-[3px] bg-white border border-[#dcdcdc] rounded-[3px]"><option>电气</option></select><svg class="absolute right-[6px] top-[10px] w-[5px] h-[3px] text-[#4a5368]"><use href="#caret"/></svg></label>
  <label class="relative"><select aria-label="构件类型" class="appearance-none w-[100px] h-[23px] pl-[3px] bg-white border border-[#dcdcdc] rounded-[3px]"><option>配电箱柜(电)</option></select><svg class="absolute right-[6px] top-[10px] w-[5px] h-[3px] text-[#4a5368]"><use href="#caret"/></svg></label>
  <label class="relative"><select aria-label="构件" class="appearance-none w-[100px] h-[23px] pl-[3px] bg-white border border-[#dcdcdc] rounded-[3px]"><option></option></select><svg class="absolute right-[6px] top-[10px] w-[5px] h-[3px] text-[#4a5368]"><use href="#caret"/></svg></label>
  <label class="relative"><select aria-label="分层" class="appearance-none w-[100px] h-[23px] pl-[3px] bg-white border border-[#dcdcdc] rounded-[3px]"><option>分层1</option></select><svg class="absolute right-[6px] top-[10px] w-[5px] h-[3px] text-[#4a5368]"><use href="#caret"/></svg></label>
</div>

<main class="flex-1 min-h-0 flex whitespace-nowrap">
  <aside class="shrink-0 w-[139px] border-x border-[#d4d4d4] flex flex-col">
    <div class="h-3 bg-[#e6e6e6] border-b border-[#d4d4d4] flex items-center justify-end pr-[3px]"><button aria-label="关闭导航栏"><svg class="size-2" fill="none"><use href="#close"/></svg></button></div>
    <h2 class="h-[22px] leading-[22px] pl-2 bg-[#f0f0f0] border-b border-[#d4d4d4] text-[#707070]">导航栏</h2>
    <div class="h-[27px] flex items-center pl-[6px] gap-[7px] border-b border-[#d9d9d9] rounded-b">
      <button aria-label="展开"><svg class="size-4" fill="none"><use href="#pluses"/></svg></button>
      <button aria-label="编辑"><svg class="size-[15px]" fill="none"><use href="#editbox"/></svg></button>
    </div>
    <div class="flex flex-col gap-[3px] pt-[5px]">
      <button class="h-[25px] pl-[3px] text-left bg-[#ebebeb]">轴线</button>
      <button class="h-[25px] pl-[3px] text-left bg-[#ebebeb]">电气</button>
      <button class="h-[25px] pl-[15px] flex items-center gap-[14px]"><svg class="size-5" fill="none"><use href="#n-lamp"/></svg>照明灯具(电)(D)</button>
      <button class="h-[25px] pl-[15px] flex items-center gap-[14px]"><svg class="size-5" fill="none"><use href="#n-sock"/></svg>开关插座(电)(K)</button>
      <button class="h-[25px] pl-[15px] flex items-center gap-[14px] bg-[#d5e7ff]"><svg class="size-5" fill="none"><use href="#n-box"/></svg>配电箱柜(电)(P)</button>
      <button class="h-[25px] pl-[15px] flex items-center gap-[14px]"><svg class="size-5" fill="none"><use href="#n-dev"/></svg>电气设备(电)(S)</button>
      <button class="h-[25px] pl-[15px] flex items-center gap-[14px]"><svg class="size-5" fill="none"><use href="#n-tray"/></svg>桥架(电)(W)</button>
      <button class="h-[25px] pl-[15px] flex items-center gap-[14px]"><svg class="size-5" fill="none"><use href="#n-wire"/></svg>电线导管(电)(X)</button>
      <button class="h-[25px] pl-[15px] flex items-center gap-[14px]"><svg class="size-5" fill="none"><use href="#n-cable"/></svg>电缆导管(电)(L)</button>
      <button class="h-[25px] pl-[15px] flex items-center gap-[14px]"><svg class="size-5" fill="none"><use href="#n-comp"/></svg>综合管线(电)(Z)</button>
      <button class="h-[25px] pl-[15px] flex items-center gap-[14px]"><svg class="size-5" fill="none"><use href="#n-bus"/></svg>母线(电)(I)</button>
      <button class="h-[25px] pl-[15px] flex items-center gap-[14px]"><svg class="size-5" fill="none"><use href="#n-ltn"/></svg>防雷接地(电)(J)</button>
      <button class="h-[25px] pl-[15px] flex items-center gap-[14px]"><svg class="size-5" fill="none"><use href="#n-elb"/></svg>桥架通头(电)(R)</button>
      <button class="h-[25px] pl-[15px] flex items-center gap-[14px]"><svg class="size-5" fill="none"><use href="#n-grid"/></svg>零星构件(电)(A)</button>
      <button class="h-[25px] pl-[15px] flex items-center gap-[14px]"><svg class="size-5" fill="none"><use href="#n-sup"/></svg>支架(电)(N)</button>
      <button class="h-[25px] pl-[3px] text-left bg-[#ebebeb]">建筑结构</button>
      <button class="h-[25px] pl-[3px] text-left bg-[#ebebeb]">自定义</button>
    </div>
  </aside>

  <div class="shrink-0 w-[204px] ml-1 flex flex-col gap-1">
    <section class="h-[334px] shrink-0 border-x border-b border-[#d4d4d4] flex flex-col">
      <div class="h-3 bg-[#e6e6e6] border-b border-[#d4d4d4] flex items-center justify-end pr-[3px]"><button aria-label="关闭构件列表"><svg class="size-2" fill="none"><use href="#close"/></svg></button></div>
      <h2 class="h-[22px] leading-[22px] pl-2 bg-[#f0f0f0] border-b border-[#d4d4d4] text-[#707070] font-medium">构件列表</h2>
      <div class="h-[28px] flex items-center pl-1 pt-[2px] border-b border-[#d9d9d9]">
        <button class="flex items-center gap-1 text-black"><svg class="size-4" fill="none"><use href="#new"/></svg>新建<svg class="w-[5px] h-[3px] ml-[3px] text-[#707070]"><use href="#caret"/></svg></button>
        <button class="flex items-center gap-1 ml-[7px] text-[#b0b0b0]"><svg class="size-4" fill="none"><use href="#trashg"/></svg>删除</button>
        <button class="flex items-center gap-1 ml-2 text-[#b0b0b0]"><svg class="size-4" fill="none"><use href="#copyg"/></svg>复制</button>
        <button aria-label="更多工具" class="ml-auto w-[12px] h-5 rounded border border-[#e4e4e4] flex items-center justify-center"><svg class="w-[7px] h-[6px] shrink-0" viewBox="0 0 7 6"><path d="M0 0l3 3-3 3zM4 0l3 3-3 3z" fill="#333"/></svg></button>
      </div>
      <label class="h-[19px] flex items-center border-b border-[#e0e0e0] pl-[2px] pr-[7px]"><input aria-label="搜索构件" placeholder="搜索构件..." class="flex-1 min-w-0 outline-none placeholder:text-[#999]"><svg class="size-3" fill="none"><use href="#mag"/></svg></label>
      <button class="self-start ml-5 mt-1 h-[21px] px-[3px] rounded-[3px] bg-[#c2d9f2]">配电箱柜(电)</button>
    </section>
    <section class="flex-1 min-h-0 border-x border-t border-[#d4d4d4] overflow-hidden">
      <div class="h-[11px] bg-[#e6e6e6] border-b border-[#d4d4d4] flex items-center justify-end pr-[3px]"><button aria-label="关闭属性"><svg class="size-2" fill="none"><use href="#close"/></svg></button></div>
      <h2 class="h-[22px] leading-[21px] pl-2 bg-[#f0f0f0] border-b border-[#d4d4d4] text-[#707070]">属性</h2>
      <table class="table-fixed w-[226px] border-separate border-spacing-0">
        <colgroup><col class="w-[22px]"><col class="w-[115px]"><col class="w-[41px]"><col class="w-[48px]"></colgroup>
        <thead><tr class="h-[21px]"><th class="border-r border-b border-[#dcdcdc]"></th><th class="border-r border-b border-[#dcdcdc] font-normal pt-px">属性名称</th><th class="border-r border-b border-[#dcdcdc] font-normal pt-px">属性值</th><th class="border-b border-[#dcdcdc] font-normal text-left pl-2 pt-px">附加</th></tr></thead>
        <tbody><tr class="h-[21px]"><td class="border-r border-b border-[#dcdcdc] text-center pt-px">1</td><td class="border-r border-b border-[#dcdcdc]"></td><td class="border-r border-b border-[#dcdcdc]"></td><td class="border-b border-[#dcdcdc]"></td></tr></tbody>
      </table>
    </section>
  </div>

  <div class="shrink-0 w-1 flex flex-col justify-center pt-[194px]">
    <button aria-label="收起左侧面板" class="h-[100px] bg-[#5f6b78] flex items-center"><svg class="w-1 h-[6px]" viewBox="0 0 4 6"><path d="M4 0v6L1 3z" fill="#c8ccd0"/></svg></button>
  </div>

  <div class="relative flex-1 min-w-0 bg-black" aria-label="绘图区">
    <section role="dialog" aria-label="系统图" class="absolute left-[50px] right-[45px] top-[22px] bottom-0 bg-white border border-b-0 border-[#bfc1c6] flex flex-col px-[11px]">
      <header class="flex items-center h-[38px] shrink-0 pr-[1px]">
        <h2 class="text-sm leading-5 flex-1">系统图</h2>
        <div class="flex items-center gap-[17px]">
          <button aria-label="最小化"><svg class="size-[11px]" fill="none"><path d="M0 9.500h10" stroke="#666"/></svg></button>
          <button aria-label="最大化"><svg class="size-[11px]" fill="none"><rect x=".5" y=".5" width="9" height="9" stroke="#666"/></svg></button>
          <button aria-label="关闭"><svg class="size-[11px]" fill="none"><path d="M0 0l10 10M10 0L0 10" stroke="#666"/></svg></button>
        </div>
      </header>
      <div role="tablist" class="shrink-0 flex items-end gap-[3px] h-[26px]">
        <button role="tab" aria-selected="true" class="relative z-10 w-[58px] h-[26px] -mb-px rounded-t border border-b-0 border-[#bfc1c6] bg-white text-[#1a73e8]">系统表</button>
        <button role="tab" class="w-14 h-[21px] rounded-t bg-[#dcdcdc] text-[#444]">系统树</button>
      </div>
      <div class="flex-1 min-h-0 border border-b-0 border-[#bfc1c6] px-[6px] pt-[6px] flex flex-col">
        <div class="flex-1 min-h-0 flex gap-[5px]">
          <div class="shrink-0 w-64 border border-[#bfc1c6]">
            <table class="w-[252px] table-fixed border-separate border-spacing-0">
              <colgroup><col class="w-[22px]"><col class="w-[49px]"><col></colgroup>
              <thead><tr class="h-[21px] bg-[#efefef]"><th class="border-r border-b border-[#c4c4c4]"></th><th class="border-r border-b border-[#c4c4c4] font-normal pt-px">属性名称</th><th class="border-r border-b border-[#c4c4c4] font-normal pt-px">属性值</th></tr></thead>
              <tbody><tr class="h-[21px]"><td class="border-r border-b border-[#c4c4c4] bg-[#efefef] text-center pt-px">1</td><td class="border-r border-b border-[#d4d4d4]"></td><td class="border-r border-b border-[#d4d4d4]"></td></tr></tbody>
            </table>
          </div>
          <div class="flex-1 min-w-0 flex flex-col gap-[5px]">
            <div class="shrink-0 h-[29px] rounded border border-[#bfc1c6] flex items-center pl-[6px] gap-[11px]">
              <button class="flex items-center gap-1 text-black"><svg class="size-4" fill="none"><use href="#d-read"/></svg>读系统图</button>
              <button class="flex items-center gap-1 text-[#b0b0b0]"><svg class="size-4" fill="none"><use href="#d-app"/></svg>追加提取回路</button>
              <button class="flex items-center gap-1 text-[#b0b0b0]"><svg class="size-4" fill="none"><use href="#d-imp"/></svg>从构件列表导入</button>
              <button class="flex items-center gap-1 text-[#b0b0b0]"><svg class="size-4" fill="none"><use href="#d-adv"/></svg>高级设置</button>
            </div>
            <div class="shrink-0 h-[31px] rounded border border-[#bfc1c6] flex items-center pl-[6px]">
              <button class="flex items-center gap-1 text-[#b0b0b0]"><svg class="size-4" fill="none"><use href="#d-loop"/></svg>添加回路</button>
              <button class="flex items-center gap-1 ml-[11px] text-black"><svg class="size-4" fill="none"><use href="#d-box"/></svg>添加配电箱</button>
              <button class="flex items-center gap-1 ml-[11px] text-[#b0b0b0]"><svg class="size-4" fill="none"><use href="#d-del"/></svg>删除行</button>
              <span class="w-px h-5 bg-[#d9d9d9] ml-2"></span>
              <button class="flex items-center gap-1 ml-[6px] text-[#b0b0b0]"><svg class="size-4" fill="none"><use href="#d-sort"/></svg>排序<svg class="w-[5px] h-[3px] ml-[3px] text-[#707070]"><use href="#caret"/></svg></button>
              <button class="flex items-center gap-[3px] ml-[7px] text-black"><svg class="size-4" fill="none"><use href="#d-fil"/></svg>过滤<svg class="w-[5px] h-[3px] ml-1 text-[#707070]"><use href="#caret"/></svg></button>
              <span class="w-px h-5 bg-[#d9d9d9] ml-[5px]"></span>
              <label class="w-[150px] h-[26px] ml-[3px] rounded border border-[#bfc1c6] flex items-center pl-[2px] pr-[5px]"><input aria-label="搜索配电箱" placeholder="搜索配电箱" class="flex-1 min-w-0 outline-none placeholder:text-[#999]"><svg class="size-3" fill="none"><use href="#mag"/></svg></label>
            </div>
            <div class="flex-1 min-h-0 border border-[#bfc1c6] flex items-center justify-center">点击上方读系统图功能，整体框选配电箱及回路，右键提取</div>
          </div>
        </div>
        <footer class="shrink-0 h-[49px] flex items-start pt-2">
          <span class="w-[42px] leading-[17px]">提示：</span>
          <p class="flex-1 leading-[17px]">1、点击配电箱行的单元格，触发三点按钮后可从绘图区整列提取文本<br>2、在右侧表格中，点击单元格后，鼠标移动到绘图区可直接提取文本</p>
          <button class="w-20 h-[26px] mt-1 pt-px rounded-[3px] bg-[#2f7fe3] text-white">确定</button>
          <button class="w-20 h-[26px] mt-1 pt-px ml-[6px] rounded-[3px] border border-[#c8c8c8] bg-white">取消</button>
        </footer>
      </div>
    </section>

    <div role="toolbar" aria-label="视图工具" class="absolute right-0 top-0 w-[33px] h-[227px] bg-white border border-[#dcdcdc] rounded flex flex-col items-center pt-[11px] pr-[2px] text-[#4a5368]">
      <button aria-label="动态观察" class="h-[22px]"><svg class="size-[22px]" fill="none"><use href="#v-orb"/></svg></button>
      <button aria-label="三维" class="relative h-[22px] mt-[7px]"><svg class="size-[22px]" fill="none"><use href="#v-3d"/></svg><span class="absolute left-[3px] bottom-[2px] text-[8px] leading-[10px] font-bold text-[#1a73e8]">3D</span></button>
      <button aria-label="俯视" class="flex flex-col items-center gap-[7px] mt-[7px]"><svg class="size-[22px]" fill="none"><use href="#v-top"/></svg><svg class="w-[7px] h-1"><use href="#caret"/></svg></button>
      <button aria-label="实体" class="flex flex-col items-center gap-[7px] mt-[6px]"><svg class="size-[22px]" fill="none"><use href="#v-solid"/></svg><svg class="w-[7px] h-1"><use href="#caret"/></svg></button>
      <button aria-label="旋转视图" class="flex flex-col items-center gap-[7px] mt-[6px]"><svg class="size-[22px]" fill="none"><use href="#v-rot"/></svg><svg class="w-[7px] h-1"><use href="#caret"/></svg></button>
      <span class="w-[23px] h-px bg-[#4a5368] mt-[5px]"></span>
      <button aria-label="显示设置" class="mt-[6px]"><svg class="size-[22px]" fill="none"><use href="#v-list"/></svg></button>
    </div>
  </div>

  <div class="shrink-0 w-[2px] flex flex-col justify-center pt-[194px]">
    <button aria-label="收起右侧面板" class="h-[100px] bg-[#5f6b78]"></button>
  </div>
</main>
</body>
</html>
